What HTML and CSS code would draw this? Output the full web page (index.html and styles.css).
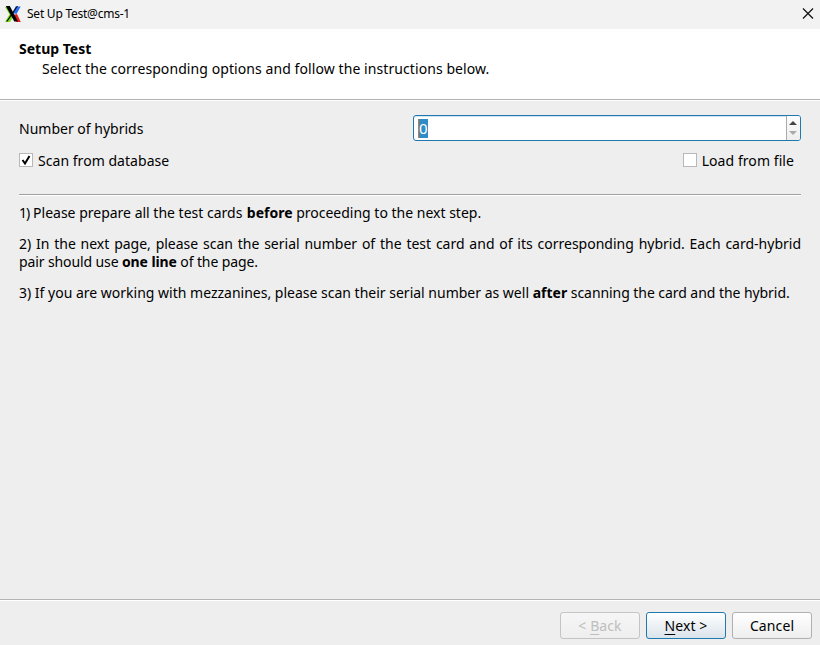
FILE: index.html
```html
<!DOCTYPE html>
<html lang="en">
<head>
<meta charset="utf-8">
<title>Set Up Test@cms-1</title>
<link rel="stylesheet" href="styles.css">
</head>
<body>
<div class="window">
  <div class="titlebar">
    <svg class="logo" width="16" height="18" viewBox="0 0 16 18">
      <path d="M10.500 1.500H15.700L11.500 9L7.500 8Z" fill="#2a6cf5"/>
      <path d="M8.500 10L12 9L15.800 17H11.500Z" fill="#e8201c"/>
      <path d="M0 2L4.500 9.300L0 17H5L9 10.500L4.500 2Z" fill="#80dc20"/>
      <path d="M0.800 1H4.800L13 16.500H9.300Z" fill="#000"/>
      <path d="M11.800 1H13L2.500 16.500H1.200Z" fill="#000"/>
    </svg>
    <span class="title">Set Up Test@cms-1</span>
    <svg class="close" width="12" height="12" viewBox="0 0 12 12"><path d="M1 0.500L11 10.500M11 0.500L1 10.500" stroke="#111" stroke-width="1.200"/></svg>
  </div>
  <header class="header">
    <h1 class="heading">Setup Test</h1>
    <p class="subtitle">Select the corresponding options and follow the instructions below.</p>
  </header>
  <main class="page">
    <div class="field">
      <span class="label">Number of hybrids</span>
      <div class="spin">
        <div class="value"><span class="selected">0</span></div>
        <div class="arrows">
          <svg width="13" height="22" viewBox="0 0 13 22"><path d="M2 9L6 5L10 9Z" fill="#444"/><path d="M2 15L6 19L10 15Z" fill="#aaa"/></svg>
        </div>
      </div>
    </div>
    <div class="options">
      <div class="option"><span class="box"><svg width="12" height="12" viewBox="0 0 12 12"><path d="M2.500 6L5 9.500L9.500 2" fill="none" stroke="#000" stroke-width="2"/></svg></span><span class="scan">Scan from database</span></div>
      <div class="option"><span class="box"></span><span class="load">Load from file</span></div>
    </div>
    <div class="rule"></div>
    <p class="step one"><span class="number">1)</span> Please prepare all the test cards <b>before</b> proceeding to the next step.</p>
    <p class="step two">2) In the next page, please scan the serial number of the test card and of its corresponding hybrid. Each card-hybrid <span class="tail">pair should use <b>one line</b> of the page.</span></p>
    <p class="step three">3) If you are working with mezzanines, please scan their serial number as well <b>after</b> <span class="ending">scanning the card and the hybrid.</span></p>
  </main>
  <footer class="footer">
    <div class="button disabled"><span>&lt; <u>B</u>ack</span></div>
    <div class="button primary"><span><u>N</u>ext &gt;</span></div>
    <div class="button"><span>Cancel</span></div>
  </footer>
</div>
</body>
</html>
```
FILE: styles.css
```css
* { box-sizing: border-box; }
body { margin: 0; font: 14px/18px "Noto Sans", sans-serif; color: #000; }
.window { width: 820px; height: 645px; display: flex; flex-direction: column; background: #eee; overflow: hidden; }
.titlebar { height: 29px; flex: none; background: #f2f2f2; display: flex; align-items: center; padding: 0 6px 2px 5px; }
.logo { margin-right: 6px; }
.title { font-size: 12px; letter-spacing: -0.24px; }
.close { margin-left: auto; }
.header { height: 72px; flex: none; background: #fff; border-bottom: 1px solid #fff; padding: 11px 19px 0; box-shadow: inset 0 -1px #b0b0b0; }
.heading { margin: 0; font-size: 14px; line-height: 18px; font-weight: 700; }
.subtitle { margin: 2px 0 0 23px; letter-spacing: 0.08px; }
.page { flex: 1; padding: 14px 19px 0; }
.field { display: flex; height: 26px; align-items: center; }
.label { flex: 1; padding-top: 2px; }
.spin { width: 388px; height: 26px; border: 1px solid #1f78ae; border-radius: 3px; background: #fff; display: flex; overflow: hidden; box-shadow: inset 0 1px #d0e6f3; }
.value { flex: 1; padding: 3px 0 0 4px; }
.selected { display: block; width: 10px; height: 19px; line-height: 19px; font-size: 15px; background: #308cc6; color: #fff; border-left: 1px solid #cf7339; }
.arrows { width: 14px; border-left: 1px solid #aaa; background: linear-gradient(#fcfcfc, #eee); }
.arrows svg { display: block; }
.options { display: flex; justify-content: space-between; height: 18px; margin-top: 11px; padding-right: 7px; }
.option { display: flex; align-items: center; gap: 5px; }
.scan { letter-spacing: 0.04px; }
.load { letter-spacing: 0.07px; }
.box { width: 14px; height: 14px; margin-top: -2px; border: 1px solid #b8b8b8; background: #fff; }
.box svg { display: block; }
.rule { height: 2px; margin-top: 24px; background: #a0a0a0; border-bottom: 1px solid #fff; }
.step { margin: 0 0 13px; text-align: justify; }
.one { margin-top: 8px; }
.number { letter-spacing: -0.9px; }
.one b { letter-spacing: 0; margin-left: 0.8px; }
.tail { letter-spacing: -0.11px; }
.ending { letter-spacing: -0.06px; }
.footer { height: 46px; flex: none; border-top: 1px solid #b4b4b4; box-shadow: inset 0 1px #fff; display: flex; justify-content: flex-end; gap: 6px; padding: 12px 8px 0 0; }
.button { width: 80px; height: 27px; border: 1px solid #b0b0b0; border-radius: 3px; background: linear-gradient(#fff, #eee); display: flex; align-items: center; justify-content: center; letter-spacing: 0.1px; }
.button u { text-underline-offset: 3px; text-decoration-thickness: 1px; }
.disabled { color: #bebebe; border-color: #c4c4c4; background: linear-gradient(#f6f6f6, #eee); }
.primary { border-color: #1f78ae; background: linear-gradient(#fff, #dae3eb); }
```
